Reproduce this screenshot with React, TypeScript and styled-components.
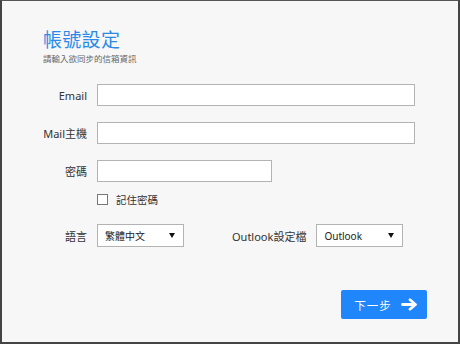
import React from "react";
import styled, { createGlobalStyle } from "styled-components";

const Global = createGlobalStyle`
  html, body { margin: 0; padding: 0; background: #ffffff; }
  body { font-family: "Noto Sans", "Noto Sans CJK TC", sans-serif; }
  * { box-sizing: border-box; }
`;

const Frame = styled.div`
  width: 460px;
  height: 344px;
  background: #f7f7f7;
  border-top: 1px solid #555;
  border-left: 2px solid #444;
  border-right: 2px solid #444;
  border-bottom: 2px solid #444;
  padding: 26px 31px 0 41px;
  display: flex;
  flex-direction: column;
`;

const Title = styled.h1`
  margin: 0;
  font-family: "Noto Sans CJK TC", sans-serif;
  font-weight: 400;
  font-size: 19px;
  line-height: 24px;
  color: #2b8ae8;
  letter-spacing: 0.3px;
`;

const Subtitle = styled.div`
  margin-top: 1px;
  font-family: "Noto Sans CJK TC", sans-serif;
  font-size: 8.5px;
  line-height: 12px;
  color: #666;
`;

const Form = styled.div`
  margin-top: 20px;
  margin-right: 12px;
  display: grid;
  grid-template-columns: 44px 1fr;
  column-gap: 10px;
  align-items: center;
`;

const Label = styled.label`
  font-family: "Noto Sans", "Noto Sans CJK TC", sans-serif;
  font-size: 11px;
  color: #333;
  text-align: right;
  white-space: nowrap;
`;

const Input = styled.input<{ $w?: number }>`
  width: ${(p) => (p.$w ? `${p.$w}px` : "100%")};
  height: 22px;
  border: 1.5px solid #b3b3b3;
  background: #fff;
  outline: none;
  margin: 0;
  padding: 0 4px;
`;

const Spacer = styled.div<{ $h: number }>`
  grid-column: 1 / -1;
  height: ${(p) => p.$h}px;
`;

const CheckRow = styled.label`
  display: flex;
  align-items: center;
  gap: 8px;
  font-family: "Noto Sans CJK TC", sans-serif;
  font-size: 10.5px;
  color: #333;
`;

const Box = styled.span`
  width: 11px;
  height: 11px;
  border: 1.5px solid #777;
  background: #fff;
  display: inline-block;
`;

const LangRow = styled.div`
  display: flex;
  align-items: center;
`;

const Select = styled.div`
  width: 87px;
  height: 23px;
  border: 1.5px solid #b3b3b3;
  background: #fff;
  display: flex;
  align-items: center;
  justify-content: space-between;
  padding: 0 8px 0 7px;
  font-family: "Noto Sans", "Noto Sans CJK TC", sans-serif;
  font-size: 10px;
  color: #222;
`;

const Caret = styled.span`
  width: 0;
  height: 0;
  border-left: 3.5px solid transparent;
  border-right: 3.5px solid transparent;
  border-top: 5px solid #111;
`;

const OutlookLabel = styled(Label)`
  margin-left: 48px;
  margin-right: 10px;
`;

const Footer = styled.div`
  margin-top: auto;
  margin-bottom: 23px;
  display: flex;
  justify-content: flex-end;
`;

const Button = styled.button`
  width: 86px;
  height: 29px;
  border: none;
  border-radius: 2px;
  background: #1f86fb;
  color: #fff;
  display: flex;
  align-items: center;
  justify-content: center;
  gap: 9px;
  font-family: "Noto Sans CJK TC", sans-serif;
  font-size: 11.5px;
  letter-spacing: 1px;
  padding: 0 0 0 4px;
`;

const Arrow = () => (
  <svg width="17" height="13" viewBox="0 0 17 13">
    <path
      d="M1.5 6.5H14M9 1.8L14.5 6.5L9 11.2"
      fill="none"
      stroke="#fff"
      strokeWidth="2.8"
      strokeLinecap="round"
      strokeLinejoin="round"
    />
  </svg>
);

export default function App() {
  return (
    <>
      <Global />
      <Frame>
        <Title>帳號設定</Title>
        <Subtitle>請輸入欲同步的信箱資訊</Subtitle>
        <Form>
          <Label>Email</Label>
          <Input />
          <Spacer $h={16} />
          <Label>Mail主機</Label>
          <Input />
          <Spacer $h={16} />
          <Label>密碼</Label>
          <Input $w={175} type="password" />
          <Spacer $h={10} />
          <span />
          <CheckRow>
            <Box />
            記住密碼
          </CheckRow>
          <Spacer $h={17} />
          <Label>語言</Label>
          <LangRow>
            <Select>
              <span>繁體中文</span>
              <Caret />
            </Select>
            <OutlookLabel>Outlook設定檔</OutlookLabel>
            <Select>
              <span>Outlook</span>
              <Caret />
            </Select>
          </LangRow>
        </Form>
        <Footer>
          <Button>
            下一步
            <Arrow />
          </Button>
        </Footer>
      </Frame>
    </>
  );
}
